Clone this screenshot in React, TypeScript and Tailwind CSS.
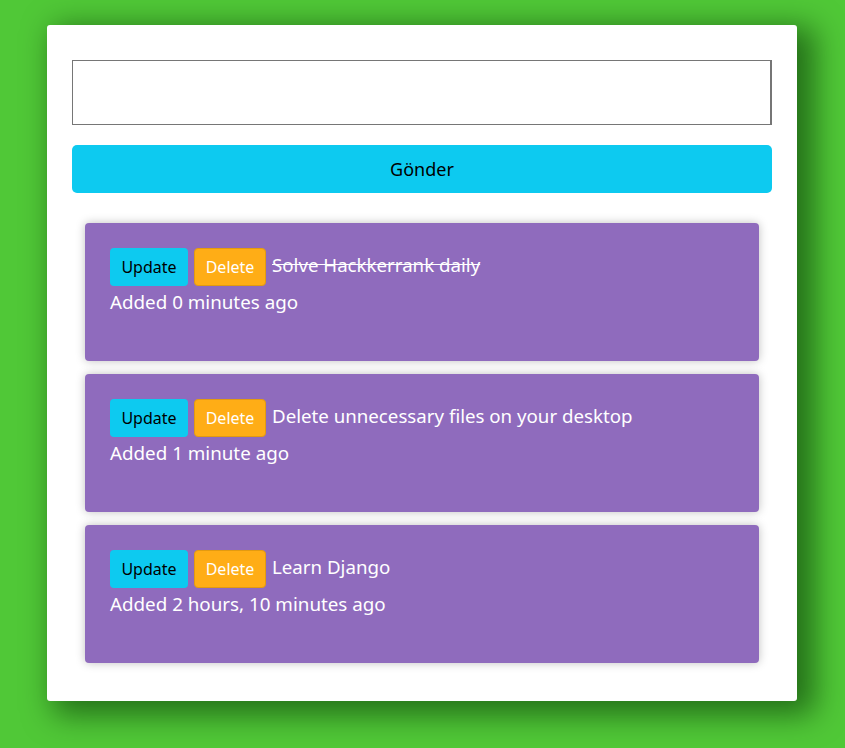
const TODOS = [
  { title: "Solve Hackkerrank daily", added: "Added 0 minutes ago", done: true },
  { title: "Delete unnecessary files on your desktop", added: "Added 1 minute ago", done: false },
  { title: "Learn Django", added: "Added 2 hours, 10 minutes ago", done: false },
];

export default function App() {
  return (
    <div
      className="min-h-[748px] w-full bg-[#50c837] pt-[25px] pb-[47px]"
      style={{ fontFamily: '"Noto Sans", "Open Sans", sans-serif' }}
    >
      <div className="ml-[47px] w-[750px] rounded-[3px] bg-white px-[25px] pt-[35px] pb-[38px] shadow-[12px_8px_30px_6px_rgba(0,40,0,0.55)]">
        <textarea className="block h-[65px] w-[700px] resize-none border border-r-2 border-[#767676] bg-white outline-none" />
        <button className="mt-5 h-[48px] w-[700px] rounded-[5px] bg-[#0dcaf0] text-[18px] text-black">
          Gönder
        </button>

        <div className="mx-[13px] mt-[30px] flex flex-col gap-[13px]">
          {TODOS.map((t) => (
            <div
              key={t.title}
              className="h-[138px] rounded-[4px] bg-[#8f6bbd] px-[25px] pt-[25px] text-white shadow-[0_0_10px_rgba(0,0,0,0.25)]"
            >
              <div className="flex items-center">
                <button className="h-[38px] w-[78px] rounded-[4px] bg-[#0dcaf0] text-[16px] text-black">
                  Update
                </button>
                <button className="ml-[6px] h-[38px] w-[72px] rounded-[4px] border border-[#e39a10] bg-[#ffad16] text-[16px] text-white">
                  Delete
                </button>
                <span
                  className={`ml-[6px] -mt-[4px] text-[18.7px] ${t.done ? "line-through" : ""}`}
                >
                  {t.title}
                </span>
              </div>
              <div className="mt-[2px] text-[18.8px]">{t.added}</div>
            </div>
          ))}
        </div>
      </div>
    </div>
  );
}
